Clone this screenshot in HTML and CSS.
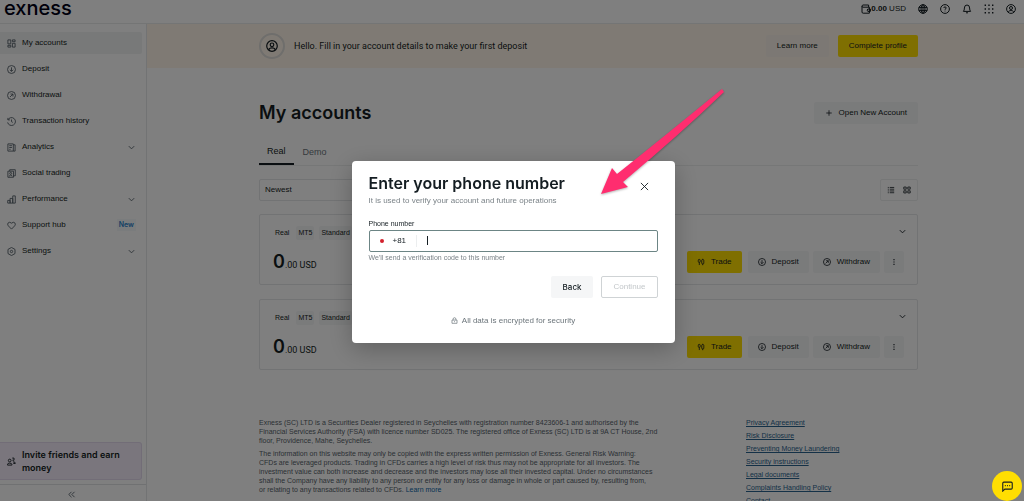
FILE: index.html
```html
<!DOCTYPE html>
<html lang="en">
<head>
<meta charset="utf-8">
<title>My accounts</title>
<link rel="stylesheet" href="styles.css">
</head>
<body>
<svg class="sprite" aria-hidden="true">
  <symbol id="i-chev" viewBox="0 0 10 10"><path d="M2 3.5 5 6.5 8 3.5"/></symbol>
  <symbol id="i-down" viewBox="0 0 10 10"><circle cx="5" cy="5" r="4.4"/><path d="M5 2.6V7M3.2 5.3 5 7.1 6.8 5.3"/></symbol>
  <symbol id="i-up" viewBox="0 0 10 10"><circle cx="5" cy="5" r="4.4"/><path d="M3.3 6.7 6.6 3.4M3.9 3.4H6.6V6.1"/></symbol>
  <symbol id="i-user" viewBox="0 0 10 10"><circle cx="5" cy="5" r="4.4"/><circle cx="5" cy="4" r="1.5"/><path d="M2.3 8.2C2.6 6 7.4 6 7.7 8.2"/></symbol>
  <symbol id="i-trade" viewBox="0 0 10 10"><path d="M2.9 5.4V8.8M7.1 1V2M7.1 7.4V9"/><rect x="1.6" y="1.8" width="2.4" height="3.6" rx=".8"/><rect x="5.9" y="2" width="2.6" height="5.4" rx="1"/></symbol>
  <symbol id="i-more" viewBox="0 0 10 10"><path class="fill" d="M4.3 1.3h1.4v1.4H4.3zM4.3 4.3h1.4v1.4H4.3zM4.3 7.3h1.4v1.4H4.3z"/></symbol>
</svg>

<div class="app">
  <header class="topbar">
    <div class="logo">exness</div>
    <div class="tools">
      <button class="wallet"><svg class="icon" viewBox="0 0 10 10"><path d="M1 2.2V8Q1 9.2 2.2 9.2H8.4V3.2H2Q1 3.2 1 2.2T2 1H7.6V3.2M9.4 5H6.8Q5.6 6.2 6.8 7.4H9.4Z"/></svg><b>0.00</b>&nbsp;USD</button>
      <button aria-label="Language"><svg class="icon" viewBox="0 0 10 10"><circle cx="5" cy="5" r="4.3"/><ellipse cx="5" cy="5" rx="2" ry="4.3"/><path d="M.8 3.6H9.2M.8 6.4H9.2M5 .7V9.3"/></svg></button>
      <button aria-label="Help"><svg class="icon" viewBox="0 0 10 10"><circle cx="5" cy="5" r="4.4"/><path d="M3.8 4Q3.8 2.9 5 2.9T6.2 4Q6.2 4.6 5 5.3V5.8M5 6.7V7.4"/></svg></button>
      <button aria-label="Notifications"><svg class="icon" viewBox="0 0 10 10"><path d="M1.4 7.4Q2.4 6.4 2.4 4Q2.4 1 5 1T7.6 4Q7.6 6.4 8.6 7.4ZM4 8.8H6"/></svg></button>
      <button aria-label="Apps"><svg class="icon" viewBox="0 0 10 10"><path class="fill" d="M.6.6H2V2H.6zM4.3.6h1.4V2H4.3zM8 .6h1.4V2H8zM.6 4.3H2v1.4H.6zM4.3 4.3h1.4v1.4H4.3zM8 4.3h1.4v1.4H8zM.6 8H2v1.4H.6zM4.3 8h1.4v1.4H4.3zM8 8h1.4v1.4H8z"/></svg></button>
      <button aria-label="Profile"><svg class="icon"><use href="#i-user"/></svg></button>
    </div>
  </header>

  <div class="shell">
    <aside class="side">
      <nav class="nav">
        <a class="on" href="#"><svg class="icon" viewBox="0 0 10 10"><path d="M1 1H4.2V5.4H1ZM6 1H9V3H6ZM1 7H4.2V9H1ZM6 4.8H9V9H6Z"/></svg>My accounts</a>
        <a href="#"><svg class="icon"><use href="#i-down"/></svg>Deposit</a>
        <a href="#"><svg class="icon"><use href="#i-up"/></svg>Withdrawal</a>
        <a href="#"><svg class="icon" viewBox="0 0 10 10"><path d="M1 1V3.2H3.2M1 3.2A4.4 4.4 0 1 1 .7 6M5 2.8V5.2L6.4 6"/></svg>Transaction history</a>
        <a href="#"><svg class="icon" viewBox="0 0 10 10"><path d="M1 1H7V9H1ZM7 2H9V9H7M2.5 3H5.5M2.5 5H5.5M2.5 7H4"/></svg>Analytics<svg class="icon chev"><use href="#i-chev"/></svg></a>
        <a href="#"><svg class="icon" viewBox="0 0 10 10"><path d="M1 2.4H7.2V9.2H1ZM3 2.4V.8H9.2V7.6H7.2M2.2 8Q4.1 5.6 6 8"/><circle cx="4.1" cy="4.9" r="1.1"/></svg>Social trading</a>
        <a href="#"><svg class="icon" viewBox="0 0 10 10"><path d="M.8 6H3.4V9H.8ZM3.4 3.8H6.4V9H3.4ZM6.4 1H9.2V9H6.4Z"/></svg>Performance<svg class="icon chev"><use href="#i-chev"/></svg></a>
        <a href="#"><svg class="icon" viewBox="0 0 10 10"><path d="M5 9 1.4 5.3Q0 3.4 1.4 2T5 2.4Q7.2.6 8.6 2T8.6 5.3Z"/></svg>Support hub<span class="new">New</span></a>
        <a href="#"><svg class="icon" viewBox="0 0 10 10"><path d="M5 .5 8.9 2.7V7.3L5 9.5 1.1 7.3V2.7Z"/><circle cx="5" cy="5" r="1.3"/></svg>Settings<svg class="icon chev"><use href="#i-chev"/></svg></a>
      </nav>
      <a class="invite" href="#"><svg class="icon" viewBox="0 0 10 10"><circle cx="3" cy="3.9" r="1.5"/><path d="M.6 9V8Q.8 6.8 3 6.8T5.4 8V9ZM5.8 1.2H7.8V3.6H6M6.6 5.4Q9.2 5 9.2 7.2H7"/></svg>Invite friends and earn money</a>
      <button class="collapse" aria-label="Collapse menu"><svg class="icon" viewBox="0 0 10 10"><path d="M5 2 2 5 5 8M8.4 2 5.4 5 8.4 8"/></svg></button>
    </aside>

    <main class="main">
      <section class="banner">
        <span class="avatar"><svg class="icon"><use href="#i-user"/></svg></span>
        <p>Hello. Fill in your account details to make your first deposit</p>
        <button class="btn cream">Learn more</button>
        <button class="btn yellow">Complete profile</button>
      </section>

      <div class="content">
        <div class="row">
          <h1>My accounts</h1>
          <button class="btn"><svg class="icon" viewBox="0 0 10 10"><path d="M5 1.6V8.4M1.6 5H8.4"/></svg>Open New Account</button>
        </div>
        <div class="tabs"><button class="on">Real</button><button>Demo</button></div>
        <div class="row filters">
          <select aria-label="Sort by"><option>Newest</option></select>
          <div class="views">
            <button aria-label="List view"><svg class="icon" viewBox="0 0 10 10"><path d="M3.4 1.8H9M3.4 4H9M3.4 6.2H9M3.4 8.4H9M1 1.8H2.2M1 4H2.2M1 6.2H2.2M1 8.4H2.2"/></svg></button>
            <button aria-label="Grid view"><svg class="icon" viewBox="0 0 10 10"><path d="M1 1.3H4V4H1ZM6 1.3H9V4H6ZM1 6H4V8.7H1ZM6 6H9V8.7H6Z"/></svg></button>
          </div>
        </div>

        <article class="card">
          <div class="row"><div class="tags"><span>Real</span><span>MT5</span><span>Standard</span></div><button class="open" aria-label="Expand"><svg class="icon"><use href="#i-chev"/></svg></button></div>
          <div class="row">
            <p class="sum"><b>0</b>.00 USD</p>
            <div class="acts">
              <button class="btn yellow trade"><svg class="icon"><use href="#i-trade"/></svg>Trade</button>
              <button class="btn"><svg class="icon"><use href="#i-down"/></svg>Deposit</button>
              <button class="btn"><svg class="icon"><use href="#i-up"/></svg>Withdraw</button>
              <button class="btn more" aria-label="More"><svg class="icon"><use href="#i-more"/></svg></button>
            </div>
          </div>
        </article>
        <article class="card">
          <div class="row"><div class="tags"><span>Real</span><span>MT5</span><span>Standard</span></div><button class="open" aria-label="Expand"><svg class="icon"><use href="#i-chev"/></svg></button></div>
          <div class="row">
            <p class="sum"><b>0</b>.00 USD</p>
            <div class="acts">
              <button class="btn yellow trade"><svg class="icon"><use href="#i-trade"/></svg>Trade</button>
              <button class="btn"><svg class="icon"><use href="#i-down"/></svg>Deposit</button>
              <button class="btn"><svg class="icon"><use href="#i-up"/></svg>Withdraw</button>
              <button class="btn more" aria-label="More"><svg class="icon"><use href="#i-more"/></svg></button>
            </div>
          </div>
        </article>

        <footer class="foot">
          <div class="legal">
            <p>Exness (SC) LTD is a Securities Dealer registered in Seychelles with registration number 8423606-1 and authorised by the<br>Financial Services Authority (FSA) with licence number SD025. The registered office of Exness (SC) LTD is at 9A CT House, 2nd<br>floor, Providence, Mahe, Seychelles.</p>
            <p>The information on this website may only be copied with the express written permission of Exness. General Risk Warning:<br>CFDs are leveraged products. Trading in CFDs carries a high level of risk thus may not be appropriate for all investors. The<br>investment value can both increase and decrease and the investors may lose all their invested capital. Under no circumstances<br>shall the Company have any liability to any person or entity for any loss or damage in whole or part caused by, resulting from,<br>or relating to any transactions related to CFDs. <a href="#">Learn more</a></p>
          </div>
          <nav class="links">
            <a href="#">Privacy Agreement</a><a href="#">Risk Disclosure</a><a href="#">Preventing Money Laundering</a><a href="#">Security instructions</a><a href="#">Legal documents</a><a href="#">Complaints Handling Policy</a><a href="#">Contact</a>
          </nav>
        </footer>
      </div>
    </main>
  </div>
</div>

<div class="overlay">
  <form class="modal" role="dialog" aria-labelledby="dlg-title">
    <div class="row head">
      <h2 id="dlg-title">Enter your phone number</h2>
      <button type="button" class="close" aria-label="Close"><svg class="icon" viewBox="0 0 10 10"><path d="M1 1 9 9M9 1 1 9"/></svg></button>
    </div>
    <p class="sub">It is used to verify your account and future operations</p>
    <label for="phone">Phone number</label>
    <div class="field">
      <span class="flag"></span><span class="code">+81</span>
      <input id="phone" type="tel">
    </div>
    <p class="hint">We'll send a verification code to this number</p>
    <div class="modal-btns">
      <button type="button" class="btn back">Back</button>
      <button type="submit" class="btn continue" disabled>Continue</button>
    </div>
    <p class="secure"><svg class="icon" viewBox="0 0 10 10"><path d="M1.4 4.4H8.6V9H1.4ZM3 4.4V3Q3 1 5 1T7 3V4.4M5 6V7.4"/></svg>All data is encrypted for security</p>
  </form>
</div>

<svg class="arrow" viewBox="0 0 124 107" aria-hidden="true"><path d="M0 105 11 79 16 85Q60 50 121 0L123 3Q78 46 22 93L27 98Z"/></svg>
<button class="chat" aria-label="Chat"><svg class="icon" viewBox="0 0 10 10"><path d="M.7 9.2V2Q.7 1 1.7 1H8.3Q9.3 1 9.3 2V6.4Q9.3 7.4 8.3 7.4H2.6ZM2.6 4.2H3.4M4.6 4.2H5.4M6.6 4.2H7.4"/></svg></button>
</body>
</html>
```

FILE: styles.css
```css
* { box-sizing: border-box; }
body {
  margin: 0;
  font: 8px/12px "Liberation Sans", Arial, sans-serif;
  color: #141d22;
  background: #fff;
}
h1, h2, p { margin: 0; }
button, input, select { font: inherit; color: inherit; }
button { border: 0; padding: 0; background: none; }
a { color: inherit; text-decoration: none; }
.sprite { display: none; }
.icon {
  width: 9px;
  height: 9px;
  flex: none;
  fill: none;
  stroke: currentColor;
  stroke-width: 1;
}
.icon .fill, symbol .fill { fill: currentColor; stroke: none; }
.row { display: flex; align-items: center; justify-content: space-between; }

.app { height: 100vh; display: flex; flex-direction: column; overflow: hidden; }
.topbar {
  display: flex;
  justify-content: space-between;
  align-items: center;
  padding: 0 8px 6px 4px;
  border-bottom: 1px solid #e8eaeb;
}
.logo { font: 500 20px/17px Inter, sans-serif; color: #000014; }
.tools { display: flex; align-items: center; gap: 12px; }
.tools button { display: flex; align-items: center; }
.tools .icon { width: 10px; height: 10px; }

.shell { flex: 1; display: flex; min-height: 0; }
.side {
  width: 147px;
  flex: none;
  display: flex;
  flex-direction: column;
  padding-top: 8px;
  border-right: 1px solid #e4e6e8;
}
.nav { display: grid; gap: 4px; padding-right: 4px; }
.nav a {
  display: flex;
  align-items: center;
  gap: 6px;
  height: 22px;
  padding: 0 6px 0 7px;
}
.nav .icon { color: #56616a; }
.nav a.on { background: #f1f2f3; border-radius: 0 2px 2px 0; }
.nav .chev { margin-left: auto; }
.new {
  margin-left: auto;
  padding: 0 2px;
  font: 600 7px/12px Inter, sans-serif;
  color: #2a82c9;
  background: #f4f8fb;
}
.invite {
  display: flex;
  align-items: center;
  gap: 6px;
  margin: auto 4px 4px 0;
  padding: 5px 20px 5px 7px;
  font: 600 9px/13px Inter, sans-serif;
  background: #f4edfa;
  border: 1px solid #e4daef;
  border-left: 0;
  border-radius: 0 3px 3px 0;
}
.collapse {
  height: 17px;
  display: flex;
  justify-content: center;
  align-items: center;
  padding: 3px 4px 0 0;
  color: #56616a;
  border-top: 1px solid #e0e2e4;
}

.main { flex: 1; min-width: 0; overflow: hidden; }
.banner {
  display: flex;
  align-items: center;
  gap: 9px;
  height: 44px;
  padding: 0 106px 0 112px;
  background: #fff5e9;
}
.banner p { flex: 1; font-family: Roboto, sans-serif; font-size: 9px; }
.avatar {
  display: grid;
  place-items: center;
  width: 26px;
  height: 26px;
  border: 2px solid #dedcd8;
  border-radius: 50%;
}
.avatar .icon { width: 12px; height: 12px; }
.btn {
  display: flex;
  align-items: center;
  justify-content: center;
  gap: 6px;
  height: 22px;
  padding: 0 11px;
  border-radius: 2px;
  background: #f5f6f7;
}
.btn .icon { width: 8px; height: 8px; }
.cream { background: #f8f1e8; }
.yellow { background: #ffde02; }

.content { padding: 33px 106px 0 112px; }
h1, h2 { font-family: Inter, sans-serif; font-weight: 600; }
h1 { font-size: 18px; line-height: 24px; }
.tabs {
  display: flex;
  gap: 1px;
  margin-top: 14px;
  font-size: 9px;
  border-bottom: 1px solid #eceeef;
}
.tabs button { height: 26px; padding: 0 8px; color: #6c757b; }
.tabs .on { color: #141d22; border-bottom: 2px solid #141d22; }
.filters { margin: 13px 0; }
.filters select {
  width: 120px;
  height: 22px;
  padding: 0 5px;
  appearance: none;
  background: #fff;
  border: 1px solid #e4e6e8;
  border-radius: 2px;
}
.views { display: flex; gap: 8px; padding: 6px; border: 1px solid #eceeef; border-radius: 2px; }
.views button { display: flex; }
.views .icon { width: 8px; height: 8px; }
.card {
  margin-bottom: 14px;
  padding: 11px 10px 11px 13px;
  border: 1px solid #e4e6e8;
  border-radius: 2px;
}
.card .row + .row { margin-top: 11px; }
.tags { display: flex; gap: 5px; font-size: 7px; line-height: 14px; }
.tags span { padding: 0 2px; background: #f5f6f7; border-radius: 2px; }
.tags span:first-child { background: none; }
.open { display: flex; margin-bottom: 4px; }
.sum { font: 9px/22px Roboto, sans-serif; height: 22px; }
.sum b { font: 600 18px/22px Inter, sans-serif; }
.acts { display: flex; gap: 4px; margin-right: 3px; }
.acts .btn { padding: 0 10px; }
.acts .more { padding: 0 6px; }
.trade { margin-right: 2px; }

.foot { display: flex; margin-top: 48px; font-size: 7px; line-height: 9px; color: #56616a; }
.legal { flex: 0 0 487px; display: grid; align-content: start; gap: 4px; white-space: nowrap; }
.legal a { color: #0b66a8; }
.links { display: grid; justify-items: start; gap: 4px; color: #28628e; }
.links a { text-decoration: underline; }

.overlay {
  position: fixed;
  inset: 0;
  display: flex;
  align-items: center;
  justify-content: center;
  padding: 2px 0 0 2px;
  background: rgba(0, 0, 0, .5);
}
.modal {
  width: 323px;
  padding: 10px 17px 16px;
  background: #fff;
  border-radius: 4px;
  box-shadow: 0 6px 24px rgba(0, 0, 0, .25);
}
h2 { font-size: 16px; line-height: 24px; }
.close { display: flex; padding: 8px 9px 0; }
.close .icon { width: 9px; height: 9px; }
.sub { color: #7b8388; margin-bottom: 11px; }
.modal label { display: block; font-size: 7px; }
.field {
  display: flex;
  align-items: center;
  height: 22px;
  border: 1px solid #6c8585;
  border-radius: 2px;
}
.flag { width: 4px; height: 4px; margin: 0 9px 0 10px; border-radius: 50%; background: #d3202c; }
.code { padding-right: 10px; border-right: 1px solid #eceeef; }
.field input {
  flex: 1;
  height: 12px;
  margin-left: 10px;
  padding: 0 2px;
  border: 0;
  outline: 0;
  background: linear-gradient(#141d22, #141d22) 0 50% / 1px 9px no-repeat;
}
.hint { font-size: 7px; color: #7b8388; }
.modal-btns { display: flex; justify-content: flex-end; gap: 8px; margin: 12px 0 17px; }
.modal-btns .btn { padding: 0 12px; }
.back { font-family: Inter, sans-serif; font-weight: 500; }
.modal-btns .continue { padding: 0 11px; background: #fff; border: 1px solid #cfd3d5; color: #c3c7ca; }
.secure { display: flex; align-items: center; justify-content: center; gap: 4px; color: #6c757b; }
.secure .icon { width: 7px; height: 7px; }

.arrow {
  position: fixed;
  left: 601px;
  top: 89px;
  width: 124px;
  height: 107px;
  fill: #ff2d6f;
  filter: drop-shadow(0 1px 1px rgba(0, 0, 0, .3));
}
.chat {
  position: fixed;
  right: 2px;
  bottom: 0;
  display: grid;
  place-items: center;
  width: 30px;
  height: 30px;
  border-radius: 50%;
  background: #ffde02;
}
.chat .icon { width: 11px; height: 11px; }
```
